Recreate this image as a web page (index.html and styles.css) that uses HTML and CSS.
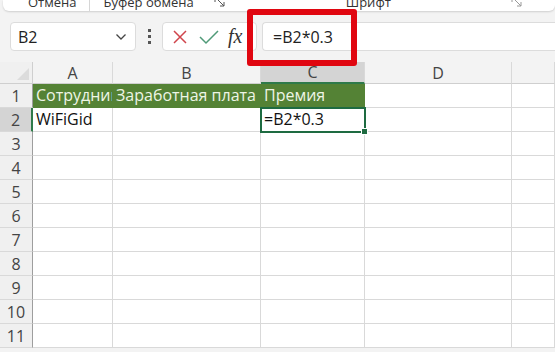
FILE: index.html
```html
<!DOCTYPE html>
<html lang="ru">
<head>
    <meta charset="UTF-8">
    <meta name="viewport" content="width=device-width, initial-scale=1.0">
    <title>Excel - Премия</title>
    <link rel="stylesheet" href="styles.css">
</head>
<body>
    <div class="ribbon">
        <div class="ribbon-inner">
            <span class="group-label undo">Отмена</span>
            <span class="ribbon-sep"></span>
            <span class="group-label clipboard">Буфер обмена</span>
            <svg class="launcher" width="12" height="12" viewBox="0 0 12 12"><path d="M1 1h5M1 1v5M4 4l6 6M10 6v4H6" fill="none" stroke="#555" stroke-width="1"/></svg>
            <span class="group-label font">Шрифт</span>
            <svg class="launcher launcher-right" width="12" height="12" viewBox="0 0 12 12"><path d="M1 1h5M1 1v5M4 4l6 6M10 6v4H6" fill="none" stroke="#999" stroke-width="1"/></svg>
        </div>
    </div>

    <div class="formula-bar">
        <div class="name-box">
            <span>B2</span>
            <svg width="12" height="8" viewBox="0 0 12 8"><path d="M1.5 1.5l4.5 4.5 4.5-4.5" fill="none" stroke="#444" stroke-width="1.3"/></svg>
        </div>
        <div class="dots"><i></i><i></i><i></i></div>
        <div class="fx-buttons">
            <svg width="16" height="16" viewBox="0 0 16 16"><path d="M2 2l12 12M14 2L2 14" stroke="#d0454c" stroke-width="1.5"/></svg>
            <svg width="20" height="16" viewBox="0 0 20 16"><path d="M1 8l6 6L19 2" fill="none" stroke="#4f9a78" stroke-width="1.5"/></svg>
            <span class="fx">fx</span>
        </div>
        <div class="formula-input">=B2*0.3</div>
        <div class="highlight"></div>
    </div>

    <div class="sheet">
        <div class="corner"><span class="corner-mark"></span></div>
        <div class="col-head">A</div>
        <div class="col-head">B</div>
        <div class="col-head active">C</div>
        <div class="col-head">D</div>
        <div class="col-head"></div>

        <div class="row-head">1</div>
        <div class="cell head-cell">Сотрудник</div>
        <div class="cell head-cell">Заработная плата</div>
        <div class="cell head-cell">Премия</div>
        <div class="cell"></div>
        <div class="cell"></div>

        <div class="row-head active">2</div>
        <div class="cell">WiFiGid</div>
        <div class="cell"></div>
        <div class="cell selected">=B2*0.3</div>
        <div class="cell"></div>
        <div class="cell"></div>

        <div class="row-head">3</div><div class="cell"></div><div class="cell"></div><div class="cell"></div><div class="cell"></div><div class="cell"></div>
        <div class="row-head">4</div><div class="cell"></div><div class="cell"></div><div class="cell"></div><div class="cell"></div><div class="cell"></div>
        <div class="row-head">5</div><div class="cell"></div><div class="cell"></div><div class="cell"></div><div class="cell"></div><div class="cell"></div>
        <div class="row-head">6</div><div class="cell"></div><div class="cell"></div><div class="cell"></div><div class="cell"></div><div class="cell"></div>
        <div class="row-head">7</div><div class="cell"></div><div class="cell"></div><div class="cell"></div><div class="cell"></div><div class="cell"></div>
        <div class="row-head">8</div><div class="cell"></div><div class="cell"></div><div class="cell"></div><div class="cell"></div><div class="cell"></div>
        <div class="row-head">9</div><div class="cell"></div><div class="cell"></div><div class="cell"></div><div class="cell"></div><div class="cell"></div>
        <div class="row-head">10</div><div class="cell"></div><div class="cell"></div><div class="cell"></div><div class="cell"></div><div class="cell"></div>
        <div class="row-head">11</div><div class="cell"></div><div class="cell"></div><div class="cell"></div><div class="cell"></div><div class="cell"></div>
    </div>
</body>
</html>
```

FILE: styles.css
```css
body {
    margin: 0;
    background-color: #f3f3f3;
    font-family: "Open Sans", "Noto Sans", sans-serif;
    color: #222;
    overflow: hidden;
}
.ribbon {
    height: 11px;
    margin: 0 0 0 3px;
    background-color: white;
    border-radius: 0 0 6px 6px;
    box-shadow: 0 1px 2px rgba(0,0,0,0.15);
    overflow: hidden;
}
.ribbon-inner {
    display: flex;
    align-items: center;
    height: 18px;
    margin-top: -7px;
    font-size: 13px;
    color: #333;
}
.undo {
    margin-left: 25px;
}
.ribbon-sep {
    width: 1px;
    height: 18px;
    background-color: #d6d6d6;
    margin: 0 14px 0 12px;
}
.launcher {
    margin-left: 20px;
}
.font {
    margin-left: 120px;
}
.launcher-right {
    margin-left: 120px;
}
.formula-bar {
    position: relative;
    display: flex;
    align-items: center;
    height: 29px;
    margin-top: 11px;
    padding-left: 10px;
}
.name-box {
    display: flex;
    align-items: center;
    justify-content: space-between;
    box-sizing: border-box;
    width: 126px;
    height: 29px;
    padding: 0 8px 0 7px;
    background-color: white;
    border: 1px solid #dcdcdc;
    border-radius: 4px;
    font-size: 16px;
    color: #222;
}
.dots {
    display: flex;
    flex-direction: column;
    gap: 3px;
    margin: 0 11px 0 12px;
}
.dots i {
    display: block;
    width: 3px;
    height: 3px;
    background-color: #555;
}
.fx-buttons {
    display: flex;
    align-items: center;
    gap: 11px;
    box-sizing: border-box;
    width: 95px;
    height: 29px;
    padding-left: 9px;
    background-color: white;
    border: 1px solid #dcdcdc;
    border-radius: 4px;
}
.fx {
    font-family: "Liberation Serif", "DejaVu Serif", serif;
    font-style: italic;
    font-size: 20px;
    color: #333;
    margin-left: -2px;
}
.formula-input {
    flex: 1;
    box-sizing: border-box;
    height: 29px;
    margin-left: 5px;
    padding: 2px 0 0 10px;
    background-color: white;
    border: 1px solid #dcdcdc;
    border-right: none;
    border-radius: 4px 0 0 4px;
    font-size: 16px;
    line-height: 24px;
    color: #222;
}
/* red annotation frame drawn over the formula bar */
.highlight {
    position: absolute;
    left: 247px;
    top: -13px;
    width: 110px;
    height: 57px;
    box-sizing: border-box;
    border: 6px solid #e00610;
    border-radius: 3px;
}
.sheet {
    display: grid;
    grid-template-columns: 33px 80px 148px 104px 147px 1fr;
    grid-template-rows: 22px;
    grid-auto-rows: 24px;
    margin-top: 11px;
    background-color: white;
    font-size: 16px;
}
.corner {
    position: relative;
    background-color: #f0f0f0;
    border-right: 1px solid #cfcfcf;
    border-bottom: 1px solid #cfcfcf;
}
.corner-mark {
    position: absolute;
    right: 3px;
    bottom: 3px;
    width: 0;
    height: 0;
    border-left: 12px solid transparent;
    border-bottom: 12px solid #dcdcdc;
}
.col-head {
    display: flex;
    align-items: center;
    justify-content: center;
    box-sizing: border-box;
    background-color: #f3f3f3;
    border-right: 1px solid #d9d9d9;
    border-bottom: 1px solid #cfcfcf;
    color: #444;
}
.col-head.active {
    background-color: #d4d4d4;
    border-bottom: 2px solid #2f7a4a;
}
.row-head {
    display: flex;
    align-items: center;
    justify-content: center;
    box-sizing: border-box;
    background-color: #f0f0f0;
    border-right: 1px solid #9e9e9e;
    border-bottom: 1px solid #d9d9d9;
    color: #444;
}
.row-head.active {
    background-color: #d4d4d4;
    border-right: 2px solid #2f7a4a;
}
.cell {
    box-sizing: border-box;
    padding: 0 3px;
    border-right: 1px solid #d9d9d9;
    border-bottom: 1px solid #d9d9d9;
    line-height: 23px;
    white-space: nowrap;
    overflow: hidden;
    color: #111;
}
.head-cell {
    background-color: #548235;
    border-color: #548235;
    color: #eef5e6;
}
.selected {
    position: relative;
    overflow: visible;
    outline: 2px solid #1e6b41;
    outline-offset: -1px;
}
.selected::after {
    content: "";
    position: absolute;
    right: -4px;
    bottom: -4px;
    width: 5px;
    height: 5px;
    background-color: #1e6b41;
    border: 1px solid white;
}
```
